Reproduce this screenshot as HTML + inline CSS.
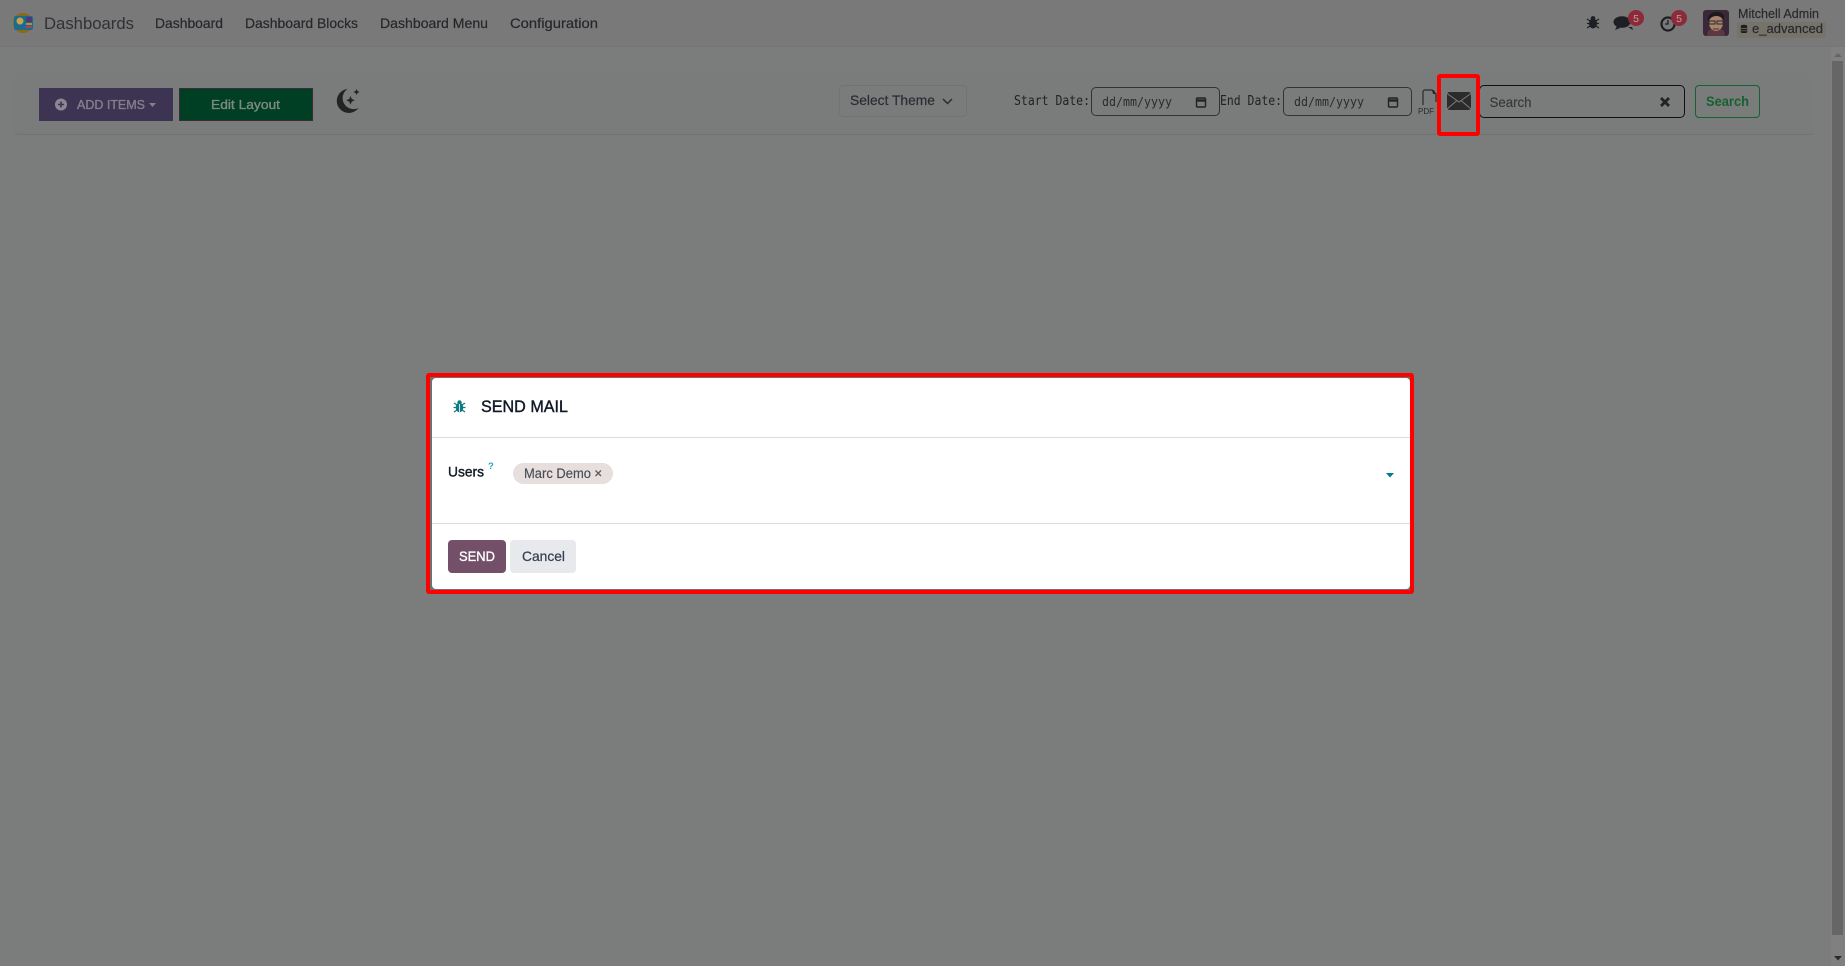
<!DOCTYPE html>
<html lang="en"><head><meta charset="utf-8"><title>Dashboards</title>
<style>
html,body{margin:0;padding:0;width:1845px;height:966px;overflow:hidden;background:#7b7d7c}
.b{position:absolute;box-sizing:border-box}
svg{position:absolute;left:0;top:0}
text{font-family:"Liberation Sans",sans-serif}
text.m{font-family:"DejaVu Sans Mono","Liberation Mono",monospace}
.s{stroke-width:.3px;paint-order:stroke}
</style></head><body>
<div class="b" style="left:0;top:0;width:1845px;height:47px;background:#797979;border-bottom:1px solid #757675"></div>
<div class="b" style="left:14px;top:73px;width:1800px;height:62px;background:#7a7c7b;border-bottom:1px solid #727473;border-radius:4px"></div>
<div class="b" style="left:1831px;top:47px;width:14px;height:919px;background:#808080"></div>
<div class="b" style="left:1832px;top:61px;width:11px;height:874px;background:#666"></div>
<div class="b" style="left:39px;top:88px;width:134px;height:33px;background:#3d3352"></div>
<div class="b" style="left:179px;top:88px;width:134px;height:33px;background:#003f24;border:1px solid #3a2a3a"></div>
<div class="b" style="left:839px;top:85px;width:128px;height:32px;border:1px solid #727473;border-radius:4px"></div>
<div class="b" style="left:1091px;top:87px;width:129px;height:29px;border:1px solid #333;border-radius:5px"></div>
<div class="b" style="left:1283px;top:87px;width:129px;height:29px;border:1px solid #333;border-radius:5px"></div>
<div class="b" style="left:1479px;top:85px;width:206px;height:33px;border:1px solid #111;border-radius:5px"></div>
<div class="b" style="left:1695px;top:85px;width:65px;height:33px;border:1px solid #17602f;border-radius:4px"></div>
<div class="b" style="left:1737px;top:22px;width:89px;height:16px;background:#75736a;border-radius:2px"></div>
<div class="b" style="left:1437px;top:74px;width:43px;height:62px;border:4px solid #f00;border-radius:3px"></div>
<div class="b" style="left:426px;top:373px;width:988px;height:221px;border:4px solid #f00;border-radius:3px;background:#6f7170"></div>
<div class="b" style="left:432px;top:378px;width:978px;height:211px;background:#fff;border-radius:4px"></div>
<div class="b" style="left:432px;top:437px;width:978px;height:1px;background:#dcdcdc"></div>
<div class="b" style="left:432px;top:523px;width:978px;height:1px;background:#dcdcdc"></div>
<div class="b" style="left:513px;top:463px;width:100px;height:21px;background:#e6dfdd;border-radius:11px"></div>
<div class="b" style="left:448px;top:540px;width:58px;height:33px;background:#744f69;border-radius:4px"></div>
<div class="b" style="left:510px;top:540px;width:66px;height:33px;background:#e7e9ed;border-radius:4px"></div>
<svg width="1845" height="966" viewBox="0 0 1845 966" xmlns="http://www.w3.org/2000/svg">
<!-- logo -->
<circle cx="23" cy="23" r="10" fill="#8a6a14"/>
<rect x="14" y="16" width="19" height="14" rx="2" fill="#1b6c8c"/>
<circle cx="20" cy="21" r="3.5" fill="#c9a24a"/>
<rect x="26" y="17" width="6" height="5" fill="#4a3a7c"/>
<rect x="26" y="23" width="6" height="2" fill="#c08a28"/>
<rect x="26" y="26" width="6" height="2" fill="#a8405c"/>
<!-- topbar text -->
<text x="44" y="29" font-size="17" fill="#2f3136" textLength="90" lengthAdjust="spacingAndGlyphs">Dashboards</text>
<g font-size="14" fill="#25272b" stroke="#25272b" stroke-width=".2">
<text x="155" y="28" textLength="68" lengthAdjust="spacingAndGlyphs">Dashboard</text>
<text x="245" y="28" textLength="113" lengthAdjust="spacingAndGlyphs">Dashboard Blocks</text>
<text x="380" y="28" textLength="108" lengthAdjust="spacingAndGlyphs">Dashboard Menu</text>
<text x="510" y="28" textLength="88" lengthAdjust="spacingAndGlyphs">Configuration</text>
</g>
<!-- toolbar buttons -->
<circle cx="61" cy="104.500" r="6" fill="#8b8894"/>
<path d="M61 101.500v6M58 104.500h6" stroke="#3d3352" stroke-width="1.600"/>
<text x="77" y="109" font-size="13" fill="#84808c" stroke="#84808c" stroke-width=".35" textLength="68" lengthAdjust="spacingAndGlyphs">ADD ITEMS</text>
<path d="M149 103h7l-3.500 4z" fill="#84808c"/>
<text x="211" y="109" font-size="13" fill="#7f8a84" stroke="#7f8a84" stroke-width=".35" textLength="69" lengthAdjust="spacingAndGlyphs">Edit Layout</text>
<!-- moon -->
<path d="M347.500 89a12 12 0 1 0 11 19a11 11 0 0 1-11-19z" fill="#232323"/>
<path d="M350.500 96l1.300 3 3 1.300-3 1.300-1.300 3-1.300-3-3-1.300 3-1.300zM356.500 89l1 2 2 1-2 1-1 2-1-2-2-1 2-1z" fill="#232323"/>
<!-- theme -->
<text x="850" y="105" font-size="14" fill="#2a2d33" stroke="#2a2d33" stroke-width=".2" textLength="85" lengthAdjust="spacingAndGlyphs">Select Theme</text>
<path d="M943 99l4.500 4.500 4.500-4.500" fill="none" stroke="#2a2c30" stroke-width="1.500"/>
<!-- dates -->
<g font-size="13" fill="#222">
<text class="m" x="1014" y="105" textLength="76" lengthAdjust="spacingAndGlyphs">Start Date:</text>
<text class="m" x="1220" y="105" textLength="62" lengthAdjust="spacingAndGlyphs">End Date:</text>
<text class="m" x="1102" y="106" fill="#2b2b2b" textLength="70" lengthAdjust="spacingAndGlyphs" font-size="12.500">dd/mm/yyyy</text>
<text class="m" x="1294" y="106" fill="#2b2b2b" textLength="70" lengthAdjust="spacingAndGlyphs" font-size="12.500">dd/mm/yyyy</text>
</g>
<g fill="none" stroke="#222" stroke-width="1.400">
<rect x="1196.500" y="98" width="9" height="9" rx="1"/><path d="M1196.500 100.500h9" stroke-width="2.400"/>
<rect x="1388.500" y="98" width="9" height="9" rx="1"/><path d="M1388.500 100.500h9" stroke-width="2.400"/>
</g>
<!-- pdf -->
<path d="M1423 105V92a2 2 0 0 1 2-2h7l4 4v8" fill="none" stroke="#2a2a2a" stroke-width="1.200"/>
<path d="M1432 90h2l2 4h-3z" fill="#2a2a2a"/>
<text x="1418" y="114" font-size="8" fill="#2a2a2a" textLength="16" lengthAdjust="spacingAndGlyphs">PDF</text>
<!-- envelope -->
<rect x="1447" y="92" width="24" height="18" rx="2.500" fill="#2b2b2b"/>
<path d="M1447 93.500l12 8.500 12-8.500M1447 109l10-8.500M1471 109l-10-8.500" fill="none" stroke="#7d7d7d" stroke-width="1"/>
<!-- search -->
<text x="1489.500" y="107" font-size="14" fill="#36383b" stroke="#36383b" stroke-width=".15" textLength="42" lengthAdjust="spacingAndGlyphs">Search</text>
<path d="M1661 98l8 8M1669 98l-8 8" stroke="#222" stroke-width="2.800"/>
<text x="1706" y="106" font-size="14" fill="#17602f" font-weight="bold" textLength="43" lengthAdjust="spacingAndGlyphs">Search</text>
<!-- systray -->
<g fill="#1c1f24">
<ellipse cx="1593" cy="23.500" rx="4" ry="5"/><circle cx="1593" cy="18.500" r="2.400"/>
<path d="M1587 19l3 2M1599 19l-3 2M1587 23.500h3M1599 23.500h-3M1587 28l3-2M1599 28l-3-2" stroke="#1c1f24" stroke-width="1.200"/>
<ellipse cx="1622" cy="22" rx="8.500" ry="5.800"/>
<path d="M1617 26l-2 4 5-2zM1628 27l5 3-1-3z"/>
</g>
<circle cx="1668" cy="24" r="6.500" fill="none" stroke="#1c1f24" stroke-width="2.200"/>
<path d="M1668 20v4h-3" fill="none" stroke="#1c1f24" stroke-width="1.300"/>
<circle cx="1636" cy="18" r="8" fill="#8d2a38"/><circle cx="1679" cy="18" r="8" fill="#8d2a38"/>
<text x="1636" y="22" font-size="10.500" fill="#b9a4a7" text-anchor="middle">5</text>
<text x="1679" y="22" font-size="10.500" fill="#b9a4a7" text-anchor="middle">5</text>
<!-- avatar -->
<rect x="1703" y="10" width="26" height="26" rx="3" fill="#3a2838"/>
<path d="M1707 36c0-6 4-8 9-8s9 2 9 8z" fill="#5a3a40"/>
<ellipse cx="1716" cy="23" rx="7" ry="8" fill="#a8846c"/>
<path d="M1708 21c-1-7 5-9 9-9s8 2 7 8c-2-3-5-4-8-4s-6 2-8 5z" fill="#1e1a1c"/>
<path d="M1709 21h6v3h-6zM1717 21h6v3h-6z" fill="none" stroke="#2a2a2a" stroke-width="1"/>
<path d="M1713 29h6" stroke="#5c3e36" stroke-width="1.200"/>
<text x="1738" y="18" font-size="12.500" fill="#26282c" stroke="#26282c" stroke-width=".15" textLength="81" lengthAdjust="spacingAndGlyphs">Mitchell Admin</text>
<g fill="#1e1e1e"><ellipse cx="1744" cy="26" rx="3.200" ry="1.300"/><rect x="1740.800" y="26" width="6.400" height="7" rx="1.200"/></g>
<path d="M1741 28.500h6M1741 30.800h6" stroke="#75736a" stroke-width=".7"/>
<text x="1752" y="33" font-size="13" fill="#26282c" stroke="#26282c" stroke-width=".15" textLength="71" lengthAdjust="spacingAndGlyphs">e_advanced</text>
<!-- scrollbar arrows -->
<path d="M1834 57l4-4 4 4z" fill="#666"/>
<path d="M1834 956h8l-4 4.500z" fill="#2b2b2b"/>
<!-- dialog -->
<ellipse cx="459.500" cy="407.500" rx="3.800" ry="4.800" fill="#0f7a80"/><circle cx="459.500" cy="402.500" r="2.200" fill="#0f7a80"/>
<path d="M454 403l3 2M465 403l-3 2M453.500 407.500h3M465.500 407.500h-3M454 412l3-2M465 412l-3-2" stroke="#0f7a80" stroke-width="1.200"/>
<path d="M459.500 404v8" stroke="#fff" stroke-width=".8"/>
<text x="481" y="412" font-size="16.500" fill="#111827" stroke="#111827" stroke-width=".4" textLength="87" lengthAdjust="spacingAndGlyphs">SEND MAIL</text>
<text x="448" y="476.500" font-size="14" fill="#111827" stroke="#111827" stroke-width=".4" textLength="36" lengthAdjust="spacingAndGlyphs">Users</text>
<text x="488" y="469" font-size="9.500" fill="#1ea6d0" font-weight="bold">?</text>
<text x="524" y="478" font-size="13.500" fill="#4a4d55" stroke="#4a4d55" stroke-width=".15" textLength="67" lengthAdjust="spacingAndGlyphs">Marc Demo</text>
<path d="M595.500 470.500l5.500 5.500M601 470.500l-5.500 5.500" stroke="#5a5d64" stroke-width="1.300"/>
<path d="M1386 473h8l-4 4.500z" fill="#017e84"/>
<text x="459" y="561" font-size="13.500" fill="#fff" stroke="#fff" stroke-width=".35" textLength="36" lengthAdjust="spacingAndGlyphs">SEND</text>
<text x="522" y="561" font-size="14" fill="#374151" stroke="#374151" stroke-width=".25" textLength="43" lengthAdjust="spacingAndGlyphs">Cancel</text>
</svg>
</body></html>
